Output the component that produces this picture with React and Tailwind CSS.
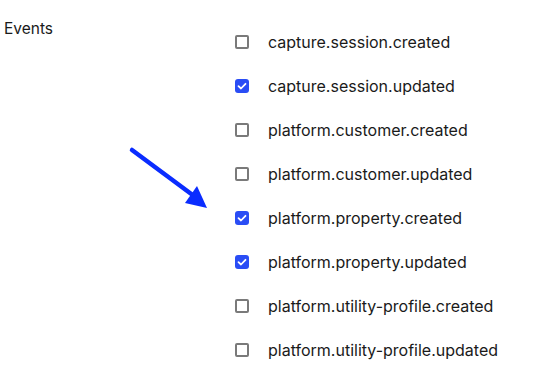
const events = [
  { name: "capture.session.created", checked: false },
  { name: "capture.session.updated", checked: true },
  { name: "platform.customer.created", checked: false },
  { name: "platform.customer.updated", checked: false },
  { name: "platform.property.created", checked: true },
  { name: "platform.property.updated", checked: true },
  { name: "platform.utility-profile.created", checked: false },
  { name: "platform.utility-profile.updated", checked: false },
]

function Box({ checked }) {
  if (checked) {
    return (
      <span className="flex h-[14px] w-[14px] items-center justify-center rounded-[3px] bg-[#2a4df5]">
        <svg viewBox="0 0 14 14" className="h-[14px] w-[14px]">
          <path d="M3.5 7.2 L6 9.5 L10.5 4.8" fill="none" stroke="white" strokeWidth="1.8" strokeLinecap="round" strokeLinejoin="round" />
        </svg>
      </span>
    )
  }
  return <span className="block h-[14px] w-[14px] rounded-[2px] border-2 border-[#7a7a7a] bg-white" />
}

export default function App() {
  return (
    <div className="relative h-[383px] w-[558px] bg-white text-[#1a1a1a]" style={{ fontFamily: "Inter, 'Noto Sans', sans-serif" }}>
      <div className="flex">
        <div className="w-[235px] pl-[4px] pt-[19px] text-[15.5px] leading-[20px]">Events</div>
        <ul className="pt-[20px]">
          {events.map((e) => (
            <li key={e.name} className="flex h-[44px] items-center">
              <Box checked={e.checked} />
              <span className="ml-[19px] text-[16px] leading-[20px]">{e.name}</span>
            </li>
          ))}
        </ul>
      </div>
      {/* annotation arrow */}
      <svg className="absolute left-0 top-0" width="558" height="383" viewBox="0 0 558 383">
        <line x1="132" y1="150" x2="194" y2="196" stroke="#0a2cff" strokeWidth="4.5" strokeLinecap="round" />
        <polygon points="207,208 185,203 197,186" fill="#0a2cff" />
      </svg>
    </div>
  )
}
